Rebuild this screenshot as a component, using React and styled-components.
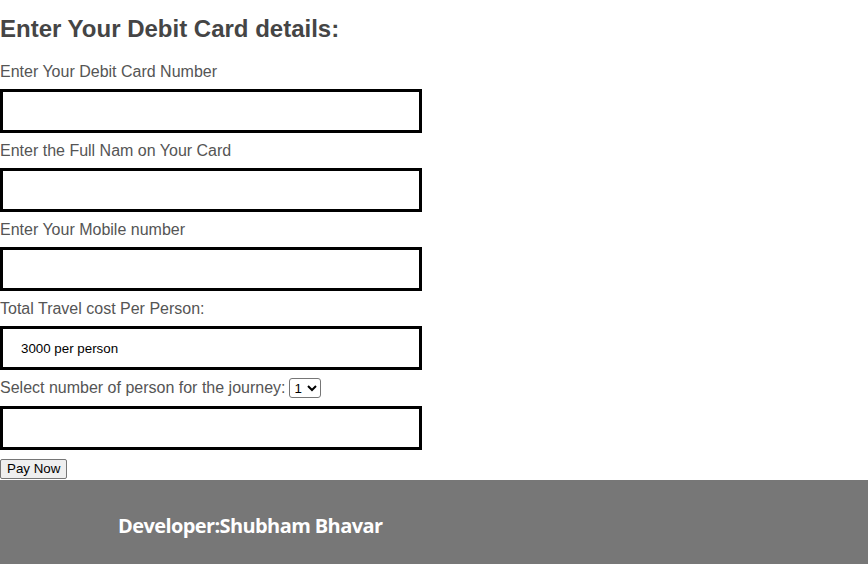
import React from "react";
import styled, { createGlobalStyle } from "styled-components";

const Global = createGlobalStyle`
  html, body { margin: 0; padding: 0; background: #fff; }
  body { font-family: "Liberation Sans", Arial, sans-serif; }
`;

const Page = styled.div`
  width: 868px;
  height: 564px;
  display: flex;
  flex-direction: column;
  overflow: hidden;
`;

const Form = styled.form`
  display: flex;
  flex-direction: column;
  align-items: flex-start;
  padding-top: 15px;
  flex: 1;
`;

const Heading = styled.h2`
  margin: 0 0 20px 0;
  font-size: 24px;
  line-height: 28px;
  font-weight: bold;
  color: #454545;
`;

const Label = styled.label`
  display: flex;
  align-items: center;
  gap: 3px;
  font-size: 16px;
  line-height: 18px;
  height: 18px;
  color: #555;
  margin-bottom: ${(p) => (p.$inline ? "9px" : "8px")};
`;

const Input = styled.input`
  box-sizing: border-box;
  width: 422px;
  height: 44px;
  border: 3px solid #000;
  margin: 0 0 9px 0;
  padding: 0 0 0 18px;
  font-family: "Liberation Sans", Arial, sans-serif;
  font-size: 13.33px;
  color: #000;
  background: #fff;
  outline: none;
`;

const Select = styled.select`
  height: 20px;
  font-family: "Liberation Sans", Arial, sans-serif;
  font-size: 13.33px;
  border: 1px solid #767676;
  border-radius: 3px;
  background: #fff;
  color: #000;
  padding: 0 1px;
`;

const PayButton = styled.button`
  height: 20px;
  padding: 1px 6px;
  font-family: "Liberation Sans", Arial, sans-serif;
  font-size: 13.33px;
  color: #000;
  background: #efefef;
  border: 1px solid #767676;
  border-radius: 2px;
  line-height: 16px;
`;

const Footer = styled.footer`
  height: 84px;
  background: #777;
  display: flex;
  align-items: center;
  padding: 7px 0 0 118px;
  box-sizing: border-box;
  flex-shrink: 0;
`;

const FooterText = styled.h3`
  margin: 0;
  font-family: "Open Sans", "Noto Sans", sans-serif;
  font-weight: 700;
  font-size: 20px;
  color: #fff;
  letter-spacing: -0.6px;
`;

export default function App() {
  return (
    <Page>
      <Global />
      <Form onSubmit={(e) => e.preventDefault()}>
        <Heading>Enter Your Debit Card details:</Heading>
        <Label>Enter Your Debit Card Number</Label>
        <Input type="text" />
        <Label>Enter the Full Nam on Your Card</Label>
        <Input type="text" />
        <Label>Enter Your Mobile number</Label>
        <Input type="text" />
        <Label>Total Travel cost Per Person:</Label>
        <Input type="text" defaultValue="3000 per person" readOnly />
        <Label $inline>
          Select number of person for the journey:
          <Select defaultValue="1">
            <option>1</option>
            <option>2</option>
            <option>3</option>
            <option>4</option>
          </Select>
        </Label>
        <Input type="text" />
        <PayButton type="submit">Pay Now</PayButton>
      </Form>
      <Footer>
        <FooterText>Developer:Shubham Bhavar</FooterText>
      </Footer>
    </Page>
  );
}
